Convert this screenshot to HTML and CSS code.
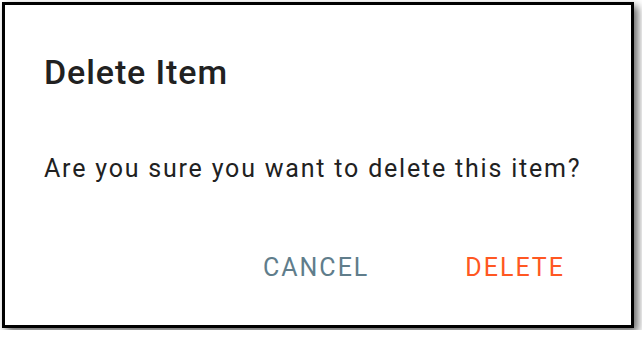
FILE: index.html
```html
<!DOCTYPE html>
<html lang="en">
<head>
  <meta charset="UTF-8">
  <title>Delete Item</title>
  <link rel="stylesheet" href="styles.css">
</head>
<body>
  <div class="dialog">
    <h2 class="title">Delete Item</h2>
    <p class="text">Are you sure you want to delete this item?</p>
    <div class="actions">
      <button class="btn cancel">Cancel</button>
      <button class="btn delete">Delete</button>
    </div>
  </div>
</body>
</html>
```
FILE: styles.css
```css
html, body {
  margin: 0;
  padding: 0;
}
body {
  background-color: white;
  padding: 2px;
  font-family: Roboto, "Liberation Sans", sans-serif;
}
.dialog {
  width: 626px;
  height: 320px;
  border: 3px solid black;
  background-color: white;
  box-shadow: 4px 4px 8px rgba(0, 0, 0, 0.6);
}
.title {
  margin: 47px 0 0 39px;
  font-size: 34px;
  font-weight: 500;
  line-height: 40px;
  letter-spacing: 0.9px;
  color: #212121;
}
.text {
  margin: 62px 0 0 39px;
  font-size: 25px;
  line-height: 30px;
  letter-spacing: 1.8px;
  color: #212121;
}
.actions {
  display: flex;
  justify-content: flex-end;
  gap: 64px;
  margin: 61px 50px 0 0;
}
.btn {
  background: none;
  border: none;
  padding: 8px 16px;
  font-family: Roboto, "Liberation Sans", sans-serif;
  font-size: 25px;
  line-height: 30px;
  letter-spacing: 2px;
  text-transform: uppercase;
  cursor: pointer;
}
.cancel {
  color: #607d8b;
}
.delete {
  color: #ff5722;
}
```
